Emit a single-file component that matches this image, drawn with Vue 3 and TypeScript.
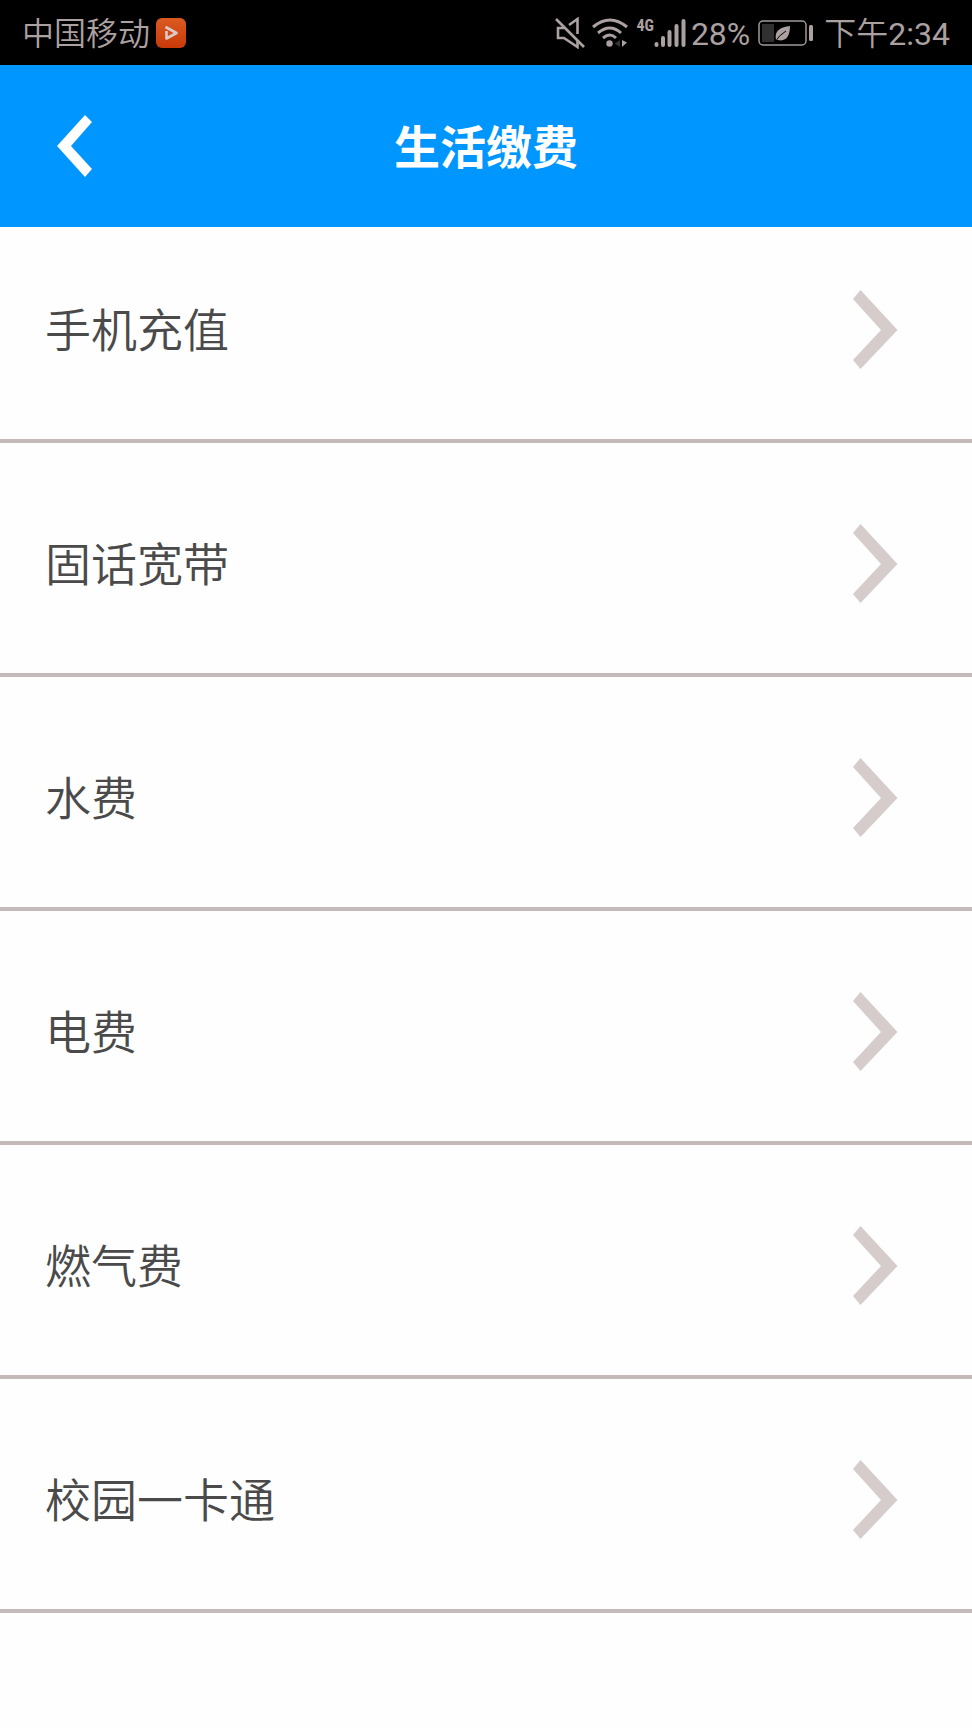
<script setup lang="ts">
interface Service {
  id: string
  label: string
}

const services: Service[] = [
  { id: 'mobile', label: '手机充值' },
  { id: 'broadband', label: '固话宽带' },
  { id: 'water', label: '水费' },
  { id: 'electricity', label: '电费' },
  { id: 'gas', label: '燃气费' },
  { id: 'campus', label: '校园一卡通' },
]
</script>

<template>
  <div class="screen">
    <div class="status">
      <span class="carrier">中国移动</span>
      <svg class="app-badge" width="30" height="30" viewBox="0 0 30 30" aria-hidden="true">
        <defs>
          <linearGradient id="badge-fill" x1="0" y1="0" x2="0" y2="1">
            <stop offset="0" stop-color="#dc5a22" />
            <stop offset="1" stop-color="#c83a08" />
          </linearGradient>
        </defs>
        <rect width="30" height="30" rx="6" fill="url(#badge-fill)" />
        <path d="M10.500 13V20.500L20.500 15L9.500 9" fill="none" stroke="#dccbc8" stroke-width="2.600" stroke-linejoin="round" />
      </svg>

      <div class="indicators">
        <svg class="mute" width="30" height="32" viewBox="0 0 30 32" aria-hidden="true">
          <g fill="none" stroke="#aca1a1" stroke-width="2.600">
            <path d="M1 2L29 30" />
            <path d="M14 8L22.500 2V17" />
            <path d="M9 11H3V21H9L22.500 30V24" />
          </g>
        </svg>
        <svg class="wifi" width="36" height="30" viewBox="0 0 36 30" aria-hidden="true">
          <g fill="none" stroke="#aca1a1" stroke-width="3">
            <path d="M1 9Q18 -5 35 9" />
            <path d="M6 15Q18 5 29 15" />
            <path d="M11 20Q18 14 24 20" />
          </g>
          <circle cx="17.500" cy="25.500" r="3.200" fill="#aca1a1" />
          <path d="M28 22V29L22.500 25.500Z" fill="#333" />
          <path d="M30 22V29L35 24.500Z" fill="#aca1a1" />
        </svg>
        <span class="network">4G</span>
        <svg class="signal" width="32" height="30" viewBox="0 0 32 30" aria-hidden="true">
          <g stroke="#aca1a1" stroke-width="4" stroke-linecap="round">
            <path d="M2.500 26V27M9 20V27M15.500 14V27M22.500 8V27M29.500 3V27" />
          </g>
        </svg>
        <span class="charge">28%</span>
        <svg class="battery" width="56" height="26" viewBox="0 0 56 26" aria-hidden="true">
          <rect x="1" y="1" width="47" height="24" rx="4" fill="none" stroke="#a39999" stroke-width="1.500" />
          <rect x="4" y="4" width="12" height="18" fill="#303030" />
          <path d="M18 20C16 10 23 7 32 6C32 16 28 22 20 20Z" fill="#aca1a1" />
          <path d="M17 22Q21 15 28 11" fill="none" stroke="#000" stroke-width="1" />
          <rect x="51" y="5" width="4" height="16" rx="1.500" fill="#aca1a1" />
        </svg>
        <span class="time">下午<span class="digits">2:34</span></span>
      </div>
    </div>

    <header class="bar">
      <button class="back" type="button" aria-label="返回">
        <svg width="36" height="62" viewBox="0 0 36 62" aria-hidden="true">
          <path d="M28 0L35 7L14 31L35 54L28 62L0 31Z" fill="#fff" />
        </svg>
      </button>
      <h1 class="title">生活缴费</h1>
    </header>

    <ul class="list">
      <li v-for="service in services" :key="service.id" class="item">
        <button class="row" type="button">
          <span class="label">{{ service.label }}</span>
          <svg width="46" height="80" viewBox="0 0 46 80" aria-hidden="true">
            <path d="M8.500 0L45.500 40L8.500 79L1 70L29 40L1 9Z" fill="#d6cccc" />
          </svg>
        </button>
      </li>
    </ul>
  </div>
</template>

<style>
body {
  margin: 0;
  background: #fefefe;
}
</style>

<style scoped>
.screen {
  min-height: 100vh;
  background: #fefefe;
  font-family: Roboto, "Noto Sans CJK SC", sans-serif;
}

.status {
  display: flex;
  align-items: center;
  box-sizing: border-box;
  height: 65px;
  padding: 0 22px;
  background: #000;
  color: #aca1a1;
  font-size: 32px;
  line-height: 48px;
  font-weight: 350;
  white-space: nowrap;
}

.carrier,
.charge,
.time {
  padding-top: 2px;
}

.charge,
.digits {
  font-weight: 400;
}

.app-badge {
  margin-left: 6px;
}

.indicators {
  display: flex;
  align-items: center;
  margin-left: auto;
}

.wifi {
  margin-left: 7px;
}

.network {
  align-self: flex-start;
  margin-left: 8px;
  font-family: "Roboto Condensed", Roboto, sans-serif;
  font-size: 16px;
  line-height: 36px;
  font-weight: 700;
}

.charge {
  margin-left: 5px;
}

.battery {
  margin: 0 10px 0 8px;
}

.bar {
  display: grid;
  grid-template-columns: 1fr auto 1fr;
  align-items: center;
  height: 162px;
  background: #0096ff;
}

.back {
  display: flex;
  justify-self: start;
  margin-left: 37px;
  padding: 20px;
  border: 0;
  background: none;
}

.title {
  margin: 0;
  padding-top: 4px;
  color: #fff;
  font-size: 46px;
  line-height: 64px;
  font-weight: 700;
}

.list {
  margin: 0;
  padding: 0;
  list-style: none;
}

.item {
  border-bottom: 4px solid #c4baba;
}

.row {
  display: flex;
  align-items: center;
  justify-content: space-between;
  box-sizing: border-box;
  width: 100%;
  height: 230px;
  padding: 12px 74px 0 45px;
  border: 0;
  background: none;
  color: #4a4a4a;
  font-family: inherit;
  font-size: 46px;
  line-height: 64px;
  font-weight: 350;
  text-align: left;
}

.label {
  padding-top: 2px;
}

.item:first-child .row {
  height: 212px;
  padding-top: 0;
  padding-bottom: 6px;
}
</style>
